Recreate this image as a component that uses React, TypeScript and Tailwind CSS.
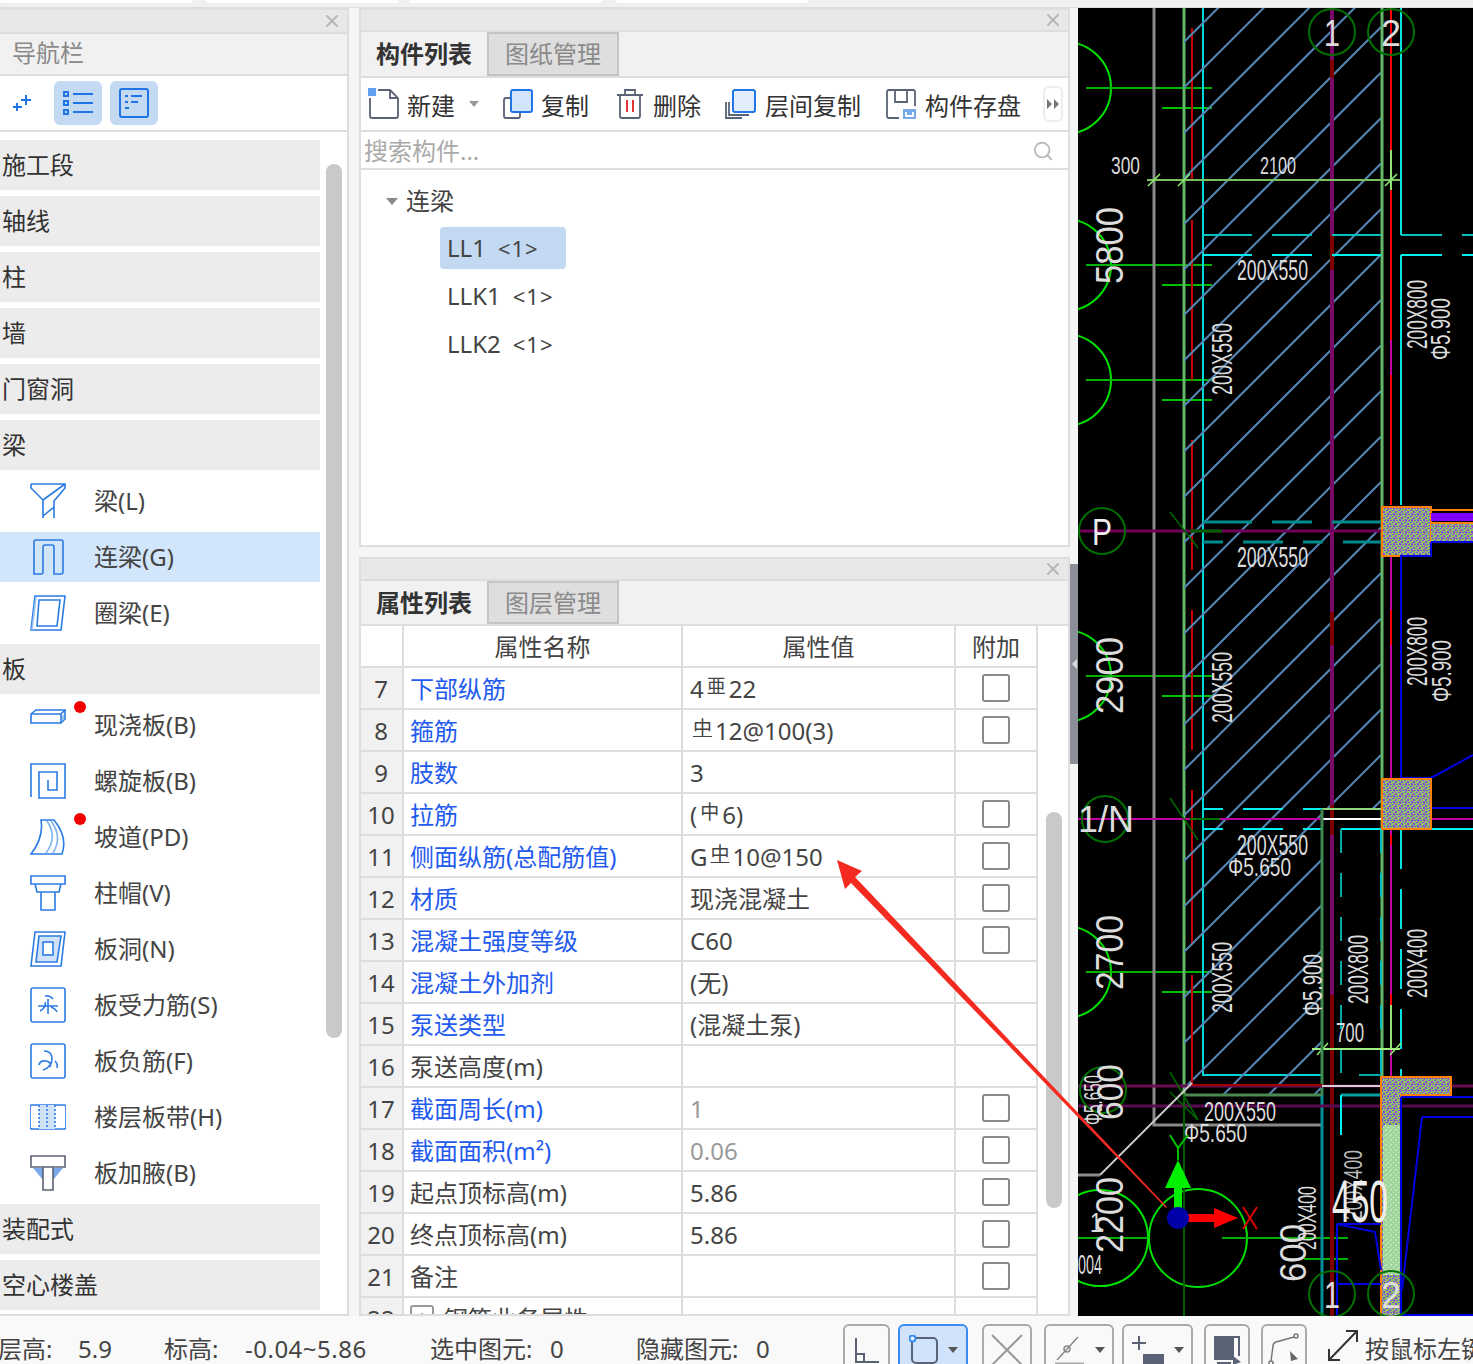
import { X, Search } from "lucide-react";

const B = "#2b7be4";
const ICO = { fill: "none", stroke: B, strokeWidth: 1.6 };

const navIcons: Record<string, React.ReactNode> = {
  beam: <g {...ICO}><path d="M1 1H35V5L24 18V35M1 1V5L13 17V35M13 33L24 24M13 17L35 1" /></g>,
  link: <g {...ICO}><path d="M4 35V3Q4 1 6 1H31Q33 1 33 3V33Q33 35 31 35H24V8Q24 6 22 6H15Q13 6 13 8V33Q13 35 11 35H4Z" /></g>,
  ring: <g {...ICO}><path d="M5 1H35L31 35H1Z" /><path d="M9 5H30L27 31H7Z" /><path d="M2 35L6 2" stroke="#9cc4f2" /></g>,
  slab: <g {...ICO}><path d="M1 7L6 3H35V12L31 16H1Z" /><path d="M1 7H31V16M31 7L35 3" /><path d="M32 9L34 7V12L32 14Z" fill="#9cc4f2" stroke="none" /></g>,
  spiral: <g {...ICO}><path d="M1 34V1H35V35H9V9H27V27H18V17" /></g>,
  ramp: <g {...ICO}><path d="M11 1H24Q38 18 32 35H1Q14 18 11 1Z" /><path d="M17 2Q28 18 16 34M21 2Q33 18 23 34" stroke="#7fb2ee" /></g>,
  cap: <g {...ICO}><path d="M1 1H35V9H1ZM5 9L7 17H29L31 9M11 17V35H25V17" /></g>,
  hole: <g {...ICO}><path d="M5 1H35L31 35H1Z" /><path d="M9 5H31L27 31H6Z" fill="#cfe2fa" /><rect x="13" y="11" width="10" height="13" fill="#fff" /></g>,
  rebar: <g {...ICO}><rect x="1" y="1" width="34" height="34" rx="2" /><path d="M15 9Q20 8 23 12M8 19H28M18 12V27M10 24Q17 20 15 15M21 20Q26 22 27 25" /></g>,
  neg: <g {...ICO}><rect x="1" y="1" width="34" height="34" rx="2" /><path d="M14 8Q22 8 22 16T13 27M9 22Q10 17 16 18T20 24M25 18Q28 21 27 25" /></g>,
  strip: <g {...ICO}><rect x="0" y="1" width="36" height="24" rx="2" transform="translate(0 5)" /><rect x="9" y="6" width="16" height="24" fill="#cfe2fa" stroke="none" /><path d="M9 6V30M25 6V30M17 6V30" strokeDasharray="2 2" /></g>,
  haunch: <g fill="none" stroke="#5a6275" strokeWidth="1.6"><path d="M3 13H13V25ZM33 13H23V25Z" fill="#78a9ea" stroke="none" /><path d="M1 1H35V12H1ZM13 12V35H23V12" /></g>,
};

const groupsTop = ["施工段", "轴线", "柱", "墙", "门窗洞", "梁"];
const beamItems: [string, string, string, boolean?][] = [
  ["梁(L)", "beam", ""],
  ["连梁(G)", "link", "", true],
  ["圈梁(E)", "ring", ""],
];
const slabItems: [string, string, boolean?][] = [
  ["现浇板(B)", "slab", true],
  ["螺旋板(B)", "spiral"],
  ["坡道(PD)", "ramp", true],
  ["柱帽(V)", "cap"],
  ["板洞(N)", "hole"],
  ["板受力筋(S)", "rebar"],
  ["板负筋(F)", "neg"],
  ["楼层板带(H)", "strip"],
  ["板加腋(B)", "haunch"],
];

function Group({ label }: { label: string }) {
  return <div className="h-[50px] w-[320px] bg-[#ececec] pl-[2px] text-[24px] leading-[50px] text-[#333]">{label}</div>;
}

function NavItem({ label, icon, active, dot }: { label: string; icon: string; active?: boolean; dot?: boolean }) {
  return (
    <div className={`relative flex h-[50px] w-[320px] items-center pl-[30px] text-[24px] text-[#444] ${active ? "bg-[#d1e5fb]" : ""}`}>
      <svg width="36" height="36" viewBox="0 0 36 36" className="shrink-0">{navIcons[icon]}</svg>
      <span className="ml-[28px]">{label}</span>
      {dot && <span className="absolute left-[74px] top-[1px] h-[12px] w-[12px] rounded-full bg-[#f00000]" />}
    </div>
  );
}

function LeftPanel() {
  return (
    <div className="flex h-full w-[349px] shrink-0 flex-col overflow-hidden border-y-2 border-r-2 border-[#ddd] bg-white">
      <div className="flex h-[22px] shrink-0 items-center justify-end bg-[#e8e8e8] pr-[5px]">
        <X size={20} strokeWidth={2.5} className="text-[#b8b8b8]" />
      </div>
      <div className="h-[44px] shrink-0 border-y-2 border-[#ddd] bg-[#f1f1f1] pl-[12px] text-[24px] leading-[38px] text-[#8a8a8a]">导航栏</div>
      <div className="flex h-[56px] shrink-0 items-center border-b-2 border-[#ddd] pl-[12px]">
        <svg width="20" height="20" viewBox="0 0 20 20" fill="none" stroke="#1f74e8" strokeWidth="2">
          <path d="M14 2V12M9 7H19M5 10V18M1 14H10" />
        </svg>
        <div className="ml-[22px] flex h-[44px] w-[48px] items-center justify-center rounded-[6px] bg-[#c4daf3]">
          <svg width="32" height="28" viewBox="0 0 32 28" fill="none" stroke="#1f74e8" strokeWidth="2">
            <path d="M2 3H6V7H2ZM2 12H6V16H2ZM2 21H6V25H2ZM11 5H31M11 14H31M11 23H31" />
          </svg>
        </div>
        <div className="ml-[8px] flex h-[44px] w-[48px] items-center justify-center rounded-[6px] bg-[#c4daf3]">
          <svg width="32" height="32" viewBox="0 0 32 32" fill="none" stroke="#1f74e8" strokeWidth="2">
            <rect x="2" y="2" width="28" height="28" rx="2" />
            <path d="M7 9H10M13 9H24M7 15H10M13 15H20M7 21H11" />
          </svg>
        </div>
      </div>
      <div className="flex min-h-0 flex-1">
        <div className="flex flex-col gap-[6px] pt-[8px]">
          {groupsTop.map((g) => <Group key={g} label={g} />)}
          {beamItems.map(([l, i, , a]) => <NavItem key={l} label={l} icon={i} active={a} />)}
          <Group label="板" />
          {slabItems.map(([l, i, d]) => <NavItem key={l} label={l} icon={i} dot={d} />)}
          <Group label="装配式" />
          <Group label="空心楼盖" />
        </div>
        <div className="ml-[6px] mt-[32px] h-[874px] w-[16px] rounded-full bg-[#c9c9c9]" />
      </div>
    </div>
  );
}

function TitleBar() {
  return (
    <div className="flex h-[22px] shrink-0 items-center justify-end border-b-2 border-[#ddd] bg-[#e8e8e8] pr-[5px]">
      <X size={20} strokeWidth={2.5} className="text-[#b8b8b8]" />
    </div>
  );
}

function Tabs({ a, b, short }: { a: string; b: string; short?: boolean }) {
  return (
    <div className={`flex shrink-0 border-b-2 border-[#ddd] bg-[#f1f1f1] text-[24px] leading-[44px] ${short ? "h-[45px]" : "h-[46px]"}`}>
      <div className="w-[128px] border-r-2 border-[#c4c4c4] text-center font-bold text-[#333]">{a}</div>
      <div className="w-[130px] border-y-2 border-r-2 border-[#c4c4c4] bg-[#dedede] text-center leading-[40px] text-[#8a8a8a]">{b}</div>
    </div>
  );
}

const D = "#5a6275";

function ToolBar() {
  return (
    <div className="flex h-[54px] shrink-0 items-center border-b-2 border-[#ddd] pl-[7px] text-[24px] text-[#333]">
      <svg width="32" height="32" viewBox="0 0 32 32" fill="none" stroke={D} strokeWidth="1.8" className="shrink-0">
        <path d="M2 10V28Q2 30 4 30H28Q30 30 30 28V10L22 2H10" />
        <path d="M22 2V10H30" stroke={D} />
        <rect x="0" y="0" width="8" height="8" fill="#5ea0ef" stroke="none" />
      </svg>
      <span className="ml-[7px] pt-[3px]">新建</span>
      <span className="ml-[14px] h-0 w-0 border-x-[5px] border-t-[6px] border-x-transparent border-t-[#999]" />
      <svg width="32" height="32" viewBox="0 0 32 32" fill="none" stroke={D} strokeWidth="1.8" className="ml-[23px] shrink-0">
        <path d="M9 10H4Q2 10 2 12V28Q2 30 4 30H16Q18 30 18 28V24" />
        <rect x="9" y="2" width="21" height="22" rx="2" fill="#d3e5fb" stroke="#1f74e8" strokeWidth="2" />
      </svg>
      <span className="ml-[7px] pt-[3px]">复制</span>
      <svg width="28" height="32" viewBox="0 0 28 32" fill="none" stroke={D} strokeWidth="1.8" className="ml-[27px] shrink-0">
        <path d="M1 7H27M9 7V2H19V7M4 7V28Q4 30 6 30H22Q24 30 24 28V7" />
        <path d="M11 12V24M17 12V24" stroke="#e02020" />
      </svg>
      <span className="ml-[9px] pt-[3px]">删除</span>
      <svg width="32" height="32" viewBox="0 0 32 32" fill="none" stroke={D} strokeWidth="1.8" className="ml-[24px] shrink-0">
        <path d="M1 14V30H17M4 14V27H24" />
        <rect x="8" y="2" width="22" height="22" rx="2" fill="#e3eefc" stroke="#1f74e8" strokeWidth="2" />
      </svg>
      <span className="ml-[8px] pt-[3px]">层间复制</span>
      <svg width="32" height="32" viewBox="0 0 32 32" fill="none" stroke={D} strokeWidth="1.8" className="ml-[24px] shrink-0">
        <path d="M14 30H4Q2 30 2 28V4Q2 2 4 2H28Q30 2 30 4V18M10 2V14H22V2" />
        <rect x="18" y="21" width="13" height="10" fill="#78a9ea" stroke="none" />
        <path d="M21 24V28H28V24" stroke="#fff" />
      </svg>
      <span className="ml-[8px] pt-[3px]">构件存盘</span>
      <div className="ml-[22px] flex h-[36px] w-[20px] items-center justify-center rounded-[6px] border-2 border-[#eee] text-[#888]">
        <svg width="12" height="10" viewBox="0 0 12 10" fill="#777"><path d="M0 0L5 5L0 10ZM7 0L12 5L7 10Z" /></svg>
      </div>
    </div>
  );
}

function TopPanel() {
  return (
    <div className="flex h-[539px] shrink-0 flex-col border-2 border-[#ddd] bg-white">
      <TitleBar />
      <Tabs a="构件列表" b="图纸管理" />
      <ToolBar />
      <div className="flex h-[38px] shrink-0 items-center justify-between border-b-2 border-[#ddd] pl-[3px] pr-[14px] pt-[2px] text-[24px] text-[#aaa]">
        <span>搜索构件...</span>
        <Search size={22} strokeWidth={2} className="text-[#bbb]" />
      </div>
      <div className="pl-[25px] pt-[11px] text-[24px] text-[#444]">
        <div className="flex h-[40px] items-center">
          <span className="h-0 w-0 border-x-[6px] border-t-[7px] border-x-transparent border-t-[#888]" />
          <span className="ml-[8px]">连梁</span>
        </div>
        <div className="ml-[54px] mt-[6px] flex h-[42px] w-[126px] items-center rounded-[4px] bg-[#c3d9f2] pl-[7px]">LL1<span className="ml-[12px] text-[22px] tracking-[1px]">&lt;1&gt;</span></div>
        <div className="ml-[54px] mt-[6px] flex h-[42px] items-center pl-[7px]">LLK1<span className="ml-[12px] text-[22px] tracking-[1px]">&lt;1&gt;</span></div>
        <div className="ml-[54px] mt-[6px] flex h-[42px] items-center pl-[7px]">LLK2<span className="ml-[12px] text-[22px] tracking-[1px]">&lt;1&gt;</span></div>
      </div>
    </div>
  );
}

function Sym({ c, u }: { c: string; u?: boolean }) {
  return <span className={`relative top-[-5px] mx-[3px] text-[19px] ${u ? "underline" : ""}`}>{c}</span>;
}

const rows: { n: number; name: string; blue?: boolean; val?: React.ReactNode; gray?: boolean; cb?: boolean }[] = [
  { n: 7, name: "下部纵筋", blue: true, val: <>4<Sym c="亜" />22</>, cb: true },
  { n: 8, name: "箍筋", blue: true, val: <><Sym c="中" u />12@100(3)</>, cb: true },
  { n: 9, name: "肢数", blue: true, val: "3" },
  { n: 10, name: "拉筋", blue: true, val: <>(<Sym c="中" />6)</>, cb: true },
  { n: 11, name: "侧面纵筋(总配筋值)", blue: true, val: <>G<Sym c="中" u />10@150</>, cb: true },
  { n: 12, name: "材质", blue: true, val: "现浇混凝土", cb: true },
  { n: 13, name: "混凝土强度等级", blue: true, val: "C60", cb: true },
  { n: 14, name: "混凝土外加剂", blue: true, val: "(无)" },
  { n: 15, name: "泵送类型", blue: true, val: "(混凝土泵)" },
  { n: 16, name: "泵送高度(m)" },
  { n: 17, name: "截面周长(m)", blue: true, val: "1", gray: true, cb: true },
  { n: 18, name: "截面面积(m²)", blue: true, val: "0.06", gray: true, cb: true },
  { n: 19, name: "起点顶标高(m)", val: "5.86", cb: true },
  { n: 20, name: "终点顶标高(m)", val: "5.86", cb: true },
  { n: 21, name: "备注", cb: true },
];

function Row({ r }: { r: (typeof rows)[number] }) {
  return (
    <div className="flex h-[42px] text-[24px] leading-[42px]">
      <div className="w-[43px] border-b-2 border-r-2 border-[#ddd] bg-[#f1f1f1] pr-[1px] text-center text-[#444]">{r.n}</div>
      <div className={`w-[279px] border-b-2 border-r-2 border-[#ddd] pl-[6px] ${r.blue ? "text-[#1f5bee]" : "text-[#444]"}`}>{r.name}</div>
      <div className={`w-[273px] whitespace-nowrap border-b-2 border-r-2 border-[#ddd] pl-[7px] ${r.gray ? "text-[#999]" : "text-[#444]"}`}>{r.val}</div>
      <div className="flex w-[82px] items-center justify-center border-b-2 border-r-2 border-[#ddd] pb-[1px]">
        {r.cb && <span className="block h-[28px] w-[28px] rounded-[3px] border-2 border-[#8a8a8a]" />}
      </div>
    </div>
  );
}

function BottomPanel() {
  return (
    <div className="flex min-h-0 flex-1 flex-col overflow-hidden border-2 border-[#ddd] bg-white">
      <TitleBar />
      <Tabs a="属性列表" b="图层管理" short />
      <div className="flex min-h-0 flex-1">
        <div className="w-[677px] shrink-0">
          <div className="flex h-[42px] text-[24px] leading-[42px] text-[#444]">
            <div className="w-[43px] border-b-2 border-r-2 border-[#ddd]" />
            <div className="w-[279px] border-b-2 border-r-2 border-[#ddd] text-center">属性名称</div>
            <div className="w-[273px] border-b-2 border-r-2 border-[#ddd] text-center">属性值</div>
            <div className="w-[82px] border-b-2 border-r-2 border-[#ddd] text-center">附加</div>
          </div>
          {rows.map((r) => <Row key={r.n} r={r} />)}
          <div className="flex h-[42px] text-[24px] leading-[42px] text-[#444]">
            <div className="w-[43px] border-r-2 border-[#ddd] bg-[#f1f1f1] pr-[1px] text-center">22</div>
            <div className="flex w-[279px] border-r-2 border-[#ddd] pl-[6px]">
              <span className="mt-[7px] flex h-[24px] w-[24px] items-center justify-center rounded-[3px] border-2 border-[#999] text-[18px] leading-none">+</span>
              <span className="ml-[10px]">钢筋业务属性</span>
            </div>
            <div className="w-[273px] border-r-2 border-[#ddd]" />
            <div className="w-[82px] border-r-2 border-[#ddd]" />
          </div>
        </div>
        <div className="ml-[8px] mt-[186px] h-[396px] w-[16px] shrink-0 rounded-full bg-[#c9c9c9]" />
      </div>
    </div>
  );
}

function T({ x, y, len, size, v, fill = "#dcdcdc", children }: { x: number; y: number; len: number; size: number; v?: boolean; fill?: string; children: string }) {
  return (
    <text x={x} y={y} fontSize={size} textLength={len} lengthAdjust="spacingAndGlyphs" fill={fill} transform={v ? `rotate(-90 ${x} ${y})` : undefined}>
      {children}
    </text>
  );
}

function L({ d, c, w = 2, dash }: { d: string; c: string; w?: number; dash?: string }) {
  return <path d={d} stroke={c} strokeWidth={w} fill="none" strokeDasharray={dash} />;
}

function Cad() {
  const hatch = Array.from({ length: 30 }, (_, k) => 1226 + (k - 1) * 45.5);
  return (
    <div className="h-[1309px] w-[395px] shrink-0 bg-black">
      <svg width="395" height="1309" viewBox="1078 8 395 1309" className="block font-['Liberation_Sans',sans-serif]">
        <defs>
          <clipPath id="hc"><path d="M1184 8H1381V809H1322V1095H1184Z" /></clipPath>
          <pattern id="tex" width="6" height="6" patternUnits="userSpaceOnUse">
            <rect width="6" height="6" fill="#8cbf6c" />
            <path d="M0 0h2v1H0zM3 1h2v2H3zM1 3h2v2H1zM4 4h2v1H4zM2 5h1v1H2z" fill="#8a48d8" />
          </pattern>
          <pattern id="tex2" width="5" height="5" patternUnits="userSpaceOnUse">
            <rect width="5" height="5" fill="#9fd49a" />
            <path d="M0 0h1v1H0zM3 2h1v1H3zM1 4h1v1H1z" fill="#d8f0d8" />
          </pattern>
        </defs>

        {/* left circles and dim ticks */}
        {[88, 265, 380, 676, 972].map((y) => (
          <g key={y}>
            <circle cx="1065" cy={y} r="46" fill="none" stroke="#00e000" strokeWidth="2" />
            <L d={`M1086 ${y}H1212`} c="#00b400" />
            <L d={`M1162 ${y + 20}H1212`} c="#00c000" />
          </g>
        ))}
        <circle cx="1100" cy="1238" r="48" fill="none" stroke="#00e000" strokeWidth="2" />
        <circle cx="1198" cy="1238" r="49" fill="none" stroke="#00e000" strokeWidth="2" />
        <L d="M1078 1238H1148M1222 1238H1348M1304 1259H1348" c="#00b000" />

        <L d="M1154 8V1125H1322" c="#8a8a8a" w="3" />
        <L d="M1184 8V1095" c="#62b868" w="3" />
        <L d="M1184 1095V1317" c="#006000" w="2" />
        <L d="M1192 28V180M1192 220V380M1192 440V570M1192 610V750M1192 790V945M1192 975V1083" c="#c80000" w="2" />
        <L d="M1203 8V1075H1322" c="#00d8d8" w="2" />

        <g clipPath="url(#hc)">
          {hatch.map((c) => <line key={c} x1="1184" y1={c - 1184} x2="1381" y2={c - 1381} stroke="#5586b4" strokeWidth="2" />)}
        </g>

        <L d="M1332 8V1317" c="#7a0a68" w="4" />
        <L d="M1332 60V78M1332 235V270M1332 612V645M1332 805V835M1332 995V1317" c="#800000" w="4" />
        <L d="M1382 8V1076" c="#62b868" w="3" />
        <L d="M1391 8V505" c="#ff0000" w="2" />
        <L d="M1391 150V190" c="#90e070" w="2" />
        <L d="M1391 340V375" c="#c000a0" w="2" />
        <L d="M1391 556V1076" c="#c000a0" w="2" />
        <L d="M1391 610V645M1391 835V845M1391 994V1005" c="#ff0000" w="2" />
        <L d="M1391 1005V1050" c="#90e070" w="2" />
        <L d="M1401 8V235M1401 255V505" c="#00e0e0" w="2" />
        <L d="M1401 235H1473" c="#00c0c0" w="2" dash="41 20" />
        <L d="M1401 255H1473" c="#00f0f0" w="2" dash="41 20" />
        <L d="M1203 235H1381" c="#00c0c0" w="2" dash="49 20 40 20" />
        <L d="M1203 255H1381" c="#00f0f0" w="2" dash="49 20 40 20" />
        <L d="M1203 522H1381" c="#008c8c" w="3" dash="49 20 40 20" />
        <L d="M1203 542H1381" c="#008c8c" w="3" dash="20 20 40 20" />
        <L d="M1203 809H1322" c="#00f0f0" w="2" dash="20 20 40 20" />
        <L d="M1203 829H1322" c="#00f0f0" w="2" dash="20 20 40 20" />
        <L d="M1341 829H1473" c="#00f0f0" w="2" />
        <L d="M1341 829V1075H1381" c="#00a8a8" w="2" dash="24 20" />
        <L d="M1381 829V1075" c="#00c0c0" w="2" dash="24 20" />
        <L d="M1401 829V1076" c="#00e0e0" w="2" dash="40 20" />

        {/* dim 300 / 2100 / 700 */}
        <L d="M1147 180H1400" c="#78c060" w="2" />
        <path d="M1148 186L1160 174M1178 186L1190 174M1385 186L1397 174" stroke="#90f070" strokeWidth="1.5" />
        <L d="M1312 1049H1400" c="#a0f080" w="2" />
        <path d="M1317 1055L1328 1043M1390 1055L1401 1043" stroke="#90f070" strokeWidth="1.5" />

        {/* horizontal axes */}
        <L d="M1078 531H1381" c="#700058" w="3" />
        <L d="M1190 531H1222" c="#006000" w="3" />
        <L d="M1078 819H1473" c="#c000a0" w="2" />
        <L d="M1190 819H1220" c="#007000" w="2" />
        <L d="M1322 809H1381" c="#90d880" w="2" />
        <L d="M1322 819H1381" c="#ffffff" w="2" />
        <L d="M1322 809V1095" c="#3c8a50" w="3" />
        <L d="M1322 1095V1317" c="#00909a" w="3" />
        <L d="M1078 1086H1473" c="#6a0a50" w="3" />
        <L d="M1192 1085H1322" c="#a00000" w="2" />
        <L d="M1192 980V1085" c="#c80000" w="2" />
        <L d="M1078 1106H1473" c="#5a0a50" w="3" />
        <L d="M1184 1095H1322" c="#4a8a50" w="3" />
        <L d="M1322 1086H1381" c="#d0d0d0" w="2" />
        <L d="M1341 1095H1381" c="#00a0a0" w="3" />
        <L d="M1341 1095V1135" c="#00f0f0" w="2" />
        <path d="M1170 512L1198 548M1170 1072L1198 1120M1170 1092L1198 1120M1170 798L1198 840" stroke="#006800" strokeWidth="1.5" />
        <L d="M1192 1083L1100 1175" c="#c8c8c8" w="2" />
        <L d="M1078 1175H1100" c="#8a8a8a" w="3" />

        {/* columns */}
        <rect x="1382" y="507" width="49" height="49" fill="url(#tex)" stroke="#ff8000" strokeWidth="2" />
        <rect x="1431" y="513" width="42" height="8" fill="#8000ff" />
        <L d="M1431 510H1473M1431 523H1473" c="#ff8000" w="2" />
        <rect x="1431" y="524" width="42" height="17" fill="url(#tex)" />
        <L d="M1431 542H1473" c="#0000e0" w="2" />
        <L d="M1431 542V556H1401V778H1431V808H1473M1431 778L1473 755" c="#0000e0" w="2" />
        <rect x="1382" y="779" width="49" height="50" fill="url(#tex)" stroke="#ff8000" strokeWidth="2" />
        <path d="M1382 1077H1451V1095H1401V1317H1381V1077Z" fill="url(#tex)" stroke="#ff8000" strokeWidth="2" />
        <rect x="1383" y="1125" width="18" height="150" fill="url(#tex2)" />
        <L d="M1401 1097H1473M1401 1097V1315" c="#0000e0" w="2" />
        <L d="M1422 1117L1402 1290M1422 1117H1473" c="#0000e0" w="2" />
        <L d="M1337 1224L1375 1232L1381 1270M1337 1224H1381M1337 1224V1317M1337 1284H1381" c="#0000e0" w="2" />
        <rect x="1400" y="1314" width="73" height="3" fill="#0000e0" />

        {/* axis bubbles */}
        {[[1332, 32], [1391, 32], [1102, 531], [1105, 819], [1332, 1294], [1391, 1294], [1103, 1090], [1103, 1340]].map(([x, y]) => (
          <circle key={`${x}${y}`} cx={x} cy={y} r="23" fill="none" stroke="#007000" strokeWidth="2" />
        ))}
        <T x={1324} y={46} len={16} size={36}>1</T>
        <T x={1381} y={46} len={20} size={36}>2</T>
        <T x={1092} y={545} len={20} size={36} fill="#eee">P</T>
        <T x={1078} y={832} len={56} size={36}>1/N</T>
        <T x={1324} y={1308} len={16} size={36} fill="#ddd">1</T>
        <T x={1381} y={1308} len={20} size={36} fill="#ddd">2</T>

        <T x={1111} y={174} len={29} size={24}>300</T>
        <T x={1260} y={174} len={36} size={24}>2100</T>
        <T x={1237} y={280} len={71} size={29}>200X550</T>
        <T x={1237} y={567} len={71} size={29}>200X550</T>
        <T x={1237} y={855} len={71} size={29}>200X550</T>
        <T x={1204} y={1121} len={72} size={27}>200X550</T>
        <T x={1228} y={876} len={63} size={26}>Φ5.650</T>
        <T x={1184} y={1142} len={63} size={26}>Φ5.650</T>
        <T x={1336} y={1042} len={28} size={28}>700</T>

        <T v x={1123} y={284} len={77} size={39}>5800</T>
        <T v x={1123} y={714} len={77} size={39}>2900</T>
        <T v x={1123} y={990} len={75} size={39}>2700</T>
        <T v x={1123} y={1253} len={76} size={39}>2200</T>
        <T v x={1232} y={395} len={72} size={29}>200X550</T>
        <T v x={1232} y={723} len={71} size={29}>200X550</T>
        <T v x={1232} y={1013} len={71} size={29}>200X550</T>
        <T v x={1427} y={349} len={69} size={29}>200X800</T>
        <T v x={1427} y={686} len={69} size={29}>200X800</T>
        <T v x={1368} y={1004} len={69} size={29}>200X800</T>
        <T v x={1427} y={998} len={69} size={29}>200X400</T>
        <T v x={1450} y={360} len={62} size={27}>Φ5.900</T>
        <T v x={1451} y={702} len={62} size={27}>Φ5.900</T>
        <T v x={1322} y={1016} len={62} size={27}>Φ5.900</T>
        <T v x={1316} y={1250} len={64} size={26}>200X400</T>
        <T v x={1362} y={1220} len={70} size={26} fill="#bbb">200X400</T>
        <T v x={1306} y={1282} len={58} size={36}>600</T>
        <T v x={1123} y={1120} len={56} size={36}>600</T>
        <T v x={1102} y={1125} len={50} size={26}>Φ5.650</T>
        <T x={1332} y={1222} len={56} size={60} fill="#eee">450</T>
        <T x={1078} y={1274} len={24} size={28}>004</T>
        <T x={1090} y={1232} len={12} size={28}>1</T>

        {/* ucs */}
        <path d="M1174 1222V1188H1165L1178 1160L1191 1188H1182V1222Z" fill="#00f000" />
        <path d="M1170 1135L1178 1148L1188 1135M1178 1148V1160" stroke="#00c000" strokeWidth="2" fill="none" />
        <path d="M1186 1214H1214V1208L1238 1218L1214 1228V1222H1186Z" fill="#ff0000" />
        <path d="M1243 1207L1257 1229M1257 1207L1243 1229" stroke="#e00000" strokeWidth="2" />
        <circle cx="1178" cy="1218" r="11" fill="#0000a8" />
      </svg>
    </div>
  );
}

function StatBtn({ w, ml, active, children }: { w: number; ml: number; active?: boolean; children: React.ReactNode }) {
  return (
    <div
      style={{ width: w, marginLeft: ml }}
      className={`flex h-[44px] shrink-0 items-center justify-center rounded-t-[6px] border-2 border-b-0 pt-[6px] ${active ? "border-[#3b8cf0] bg-[#d1e3fa]" : "border-[#aaa]"}`}
    >
      {children}
    </div>
  );
}

const Caret = () => <span className="ml-[9px] h-0 w-0 border-x-[5px] border-t-[6px] border-x-transparent border-t-[#555]" />;

function StatusBar() {
  return (
    <div className="relative flex h-[48px] shrink-0 items-start overflow-hidden bg-[#f9f9f9] pt-[8px] text-[24px] leading-[50px] text-[#444]">
      <span className="ml-[-2px] w-[80px] shrink-0">层高:</span>
      <span className="w-[86px] shrink-0">5.9</span>
      <span className="w-[81px] shrink-0">标高:</span>
      <span className="w-[185px] shrink-0 tracking-[0.5px]">-0.04~5.86</span>
      <span className="w-[120px] shrink-0">选中图元:</span>
      <span className="w-[86px] shrink-0">0</span>
      <span className="w-[120px] shrink-0">隐藏图元:</span>
      <span className="w-[87px] shrink-0">0</span>
      <StatBtn w={47} ml={0}>
        <svg width="28" height="28" viewBox="0 0 28 28" fill="none" stroke={D} strokeWidth="2"><path d="M3 2V26H26M3 18H11V26" /></svg>
      </StatBtn>
      <StatBtn w={70} ml={8} active>
        <svg width="30" height="30" viewBox="0 0 30 30" fill="none" stroke={D} strokeWidth="2"><rect x="3" y="3" width="25" height="25" rx="4" /><circle cx="3.5" cy="3.5" r="3" fill="#e8f2fe" stroke="#3b8cf0" /></svg>
        <Caret />
      </StatBtn>
      <StatBtn w={50} ml={14}>
        <svg width="34" height="34" viewBox="0 0 34 34" fill="none" stroke="#999" strokeWidth="2"><path d="M2 2L32 32M32 2L2 32" /></svg>
      </StatBtn>
      <StatBtn w={70} ml={12}>
        <svg width="32" height="32" viewBox="0 0 32 32" fill="none" stroke="#888" strokeWidth="1.5"><path d="M24 3L3 26" /><circle cx="13" cy="15" r="3" /><path d="M1 30H30" stroke="#aaa" strokeWidth="3" /></svg>
        <Caret />
      </StatBtn>
      <StatBtn w={71} ml={8}>
        <svg width="34" height="32" viewBox="0 0 34 32" fill="none" stroke={D} strokeWidth="2"><path d="M8 2V16M1 9H15" /><rect x="12" y="20" width="21" height="10" fill={D} stroke="none" /></svg>
        <Caret />
      </StatBtn>
      <StatBtn w={46} ml={11}>
        <svg width="28" height="32" viewBox="0 0 28 32" fill="none" stroke={D} strokeWidth="2"><rect x="2" y="3" width="18" height="22" fill={D} /><path d="M20 3H26V22M4 29H18" /><path d="M20 22L28 28L20 31Z" fill={D} stroke="none" /></svg>
      </StatBtn>
      <StatBtn w={46} ml={11}>
        <svg width="32" height="34" viewBox="0 0 32 34" fill="none" stroke="#777" strokeWidth="1.5"><circle cx="28" cy="3" r="2" /><circle cx="3" cy="30" r="2" /><path d="M26 4L8 9Q5 10 5 13L3 28" /><path d="M22 18L30 26L23 28Z" fill="#666" stroke="none" /></svg>
      </StatBtn>
      <svg width="32" height="34" viewBox="0 0 32 34" fill="none" stroke="#333" strokeWidth="2" className="ml-[20px] mt-[4px] shrink-0">
        <path d="M2 32L30 3M19 3H30V14M2 21V32H13" />
      </svg>
      <span className="ml-[6px] whitespace-nowrap">按鼠标左键</span>
    </div>
  );
}

export default function App() {
  return (
    <div className="relative flex h-[1364px] w-[1473px] flex-col overflow-hidden bg-[#f5f5f5] font-['Noto_Sans','Noto_Sans_CJK_SC',sans-serif]">
      {/* top tab stubs */}
      <div className="flex h-[8px] shrink-0 items-start border-b border-[#ddd] bg-[#f0f0f0]">
        <div className="h-[3px] w-[193px] rounded-b-[3px] bg-white" />
        <div className="ml-[13px] h-[3px] w-[192px] rounded-b-[3px] bg-white" />
        <div className="ml-[12px] h-[3px] w-[192px] rounded-b-[3px] bg-white" />
        <div className="ml-[14px] h-[3px] w-[192px] rounded-b-[3px] bg-white" />
      </div>
      <div className="flex h-[1308px] shrink-0">
        <LeftPanel />
        <div className="ml-[10px] flex w-[711px] shrink-0 flex-col gap-[10px]">
          <TopPanel />
          <BottomPanel />
        </div>
        <div className="flex w-[8px] shrink-0 flex-col pt-[556px]">
          <div className="flex h-[200px] w-[8px] items-center justify-center bg-[#8a8f98]">
            <span className="h-0 w-0 border-y-[5px] border-r-[5px] border-y-transparent border-r-[#ddd]" />
          </div>
        </div>
        <Cad />
      </div>
      <StatusBar />

      {/* red annotation arrow */}
      <svg width="1473" height="1364" viewBox="0 0 1473 1364" className="pointer-events-none absolute left-0 top-0">
        <path d="M837 860L862 871L855 877L1167 1207L1166 1208L851 883L845 889Z" fill="#f42a20" />
      </svg>
    </div>
  );
}
